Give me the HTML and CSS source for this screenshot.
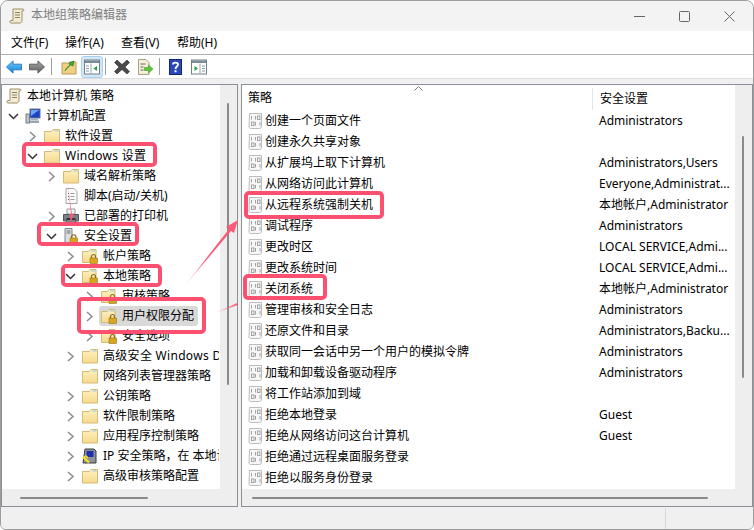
FILE: index.html
```html
<!DOCTYPE html>
<html lang="zh-CN">
<head>
<meta charset="utf-8">
<title>本地组策略编辑器</title>
<link rel="stylesheet" href="styles.css">
</head>
<body>
<svg class="defs" aria-hidden="true">
  <defs>
    <linearGradient id="fy" x1="0" y1="0" x2="0" y2="1"><stop offset="0" stop-color="#fdf1c2"/><stop offset="1" stop-color="#f6d98c"/></linearGradient>
    <linearGradient id="blue" x1="0" y1="0" x2="0" y2="1"><stop offset="0" stop-color="#6fd0fb"/><stop offset="1" stop-color="#0f7fd6"/></linearGradient>
    <linearGradient id="grey" x1="0" y1="0" x2="0" y2="1"><stop offset="0" stop-color="#a8a8a8"/><stop offset="1" stop-color="#5f5f5f"/></linearGradient>
    <linearGradient id="fadeA" gradientUnits="userSpaceOnUse" x1="183" y1="288" x2="238" y2="220"><stop offset="0" stop-color="#fb5a78" stop-opacity="0"/><stop offset=".45" stop-color="#fb5a78"/></linearGradient>
    <linearGradient id="fadeB" gradientUnits="userSpaceOnUse" x1="215" y1="313" x2="238" y2="304"><stop offset="0" stop-color="#fb5a78" stop-opacity=".1"/><stop offset="1" stop-color="#fb5a78"/></linearGradient>
    <linearGradient id="fadeC" gradientUnits="userSpaceOnUse" x1="66" y1="172" x2="71" y2="222"><stop offset="0" stop-color="#fb5a78" stop-opacity=".15"/><stop offset="1" stop-color="#fb5a78"/></linearGradient>
    <symbol id="chev-r" viewBox="0 0 11 11"><path d="M3 1l5 4.500-5 4.500" fill="none" stroke="#8c8c8c" stroke-width="1.500"/></symbol>
    <symbol id="chev-d" viewBox="0 0 11 11"><path d="M1 3l4.500 4.500L10 3" fill="none" stroke="#333" stroke-width="1.500"/></symbol>
    <symbol id="folder" viewBox="0 0 16 16"><path d="M.5 3.500V15H15.500V1.500H9L7.500 3.500Z" fill="url(#fy)" stroke="#d3ba78"/><path d="M10.500 2.500h4v1h-4z" fill="#8ccbe8"/></symbol>
    <symbol id="lockf" viewBox="0 0 16 16"><path d="M.5 3.500V14.500H14V1.500H8L6.500 3.500Z" fill="url(#fy)" stroke="#d3ba78"/><path d="M9 2.500h4v1H9z" fill="#8ccbe8"/><path d="M9.500 10V8.500a2 2 0 0 1 4 0V10" fill="none" stroke="#8a6d1c" stroke-width="1.200"/><rect x="8" y="10" width="7.500" height="5.500" fill="#d9a520" stroke="#98761a" stroke-width=".6"/></symbol>
    <symbol id="scroll" viewBox="0 0 16 16"><path d="M4 1h10c1 0 1 2 0 2h-1v9c0 2-1 3-2 3H2c-1.500 0-1.500-2.500 0-2.500h2Z" fill="#f4ecd0" stroke="#9c8e6c"/><path d="M6 4.500h5M6 7h5M6 9.500h5" stroke="#8c8468"/></symbol>
    <symbol id="pc" viewBox="0 0 16 16"><rect x="5" y="1" width="10" height="9" fill="#1b43c9" stroke="#6a7588"/><path d="M6 2l8 0-8 6z" fill="#6fa6ee"/><path d="M7 10h6v2H5z" fill="#a8b0bc"/><rect x="1" y="6" width="3.500" height="9" fill="#c1c7cf" stroke="#59616c" stroke-width=".8"/><path d="M5 12.500h9V15H5z" fill="#9aa3ae"/></symbol>
    <symbol id="script" viewBox="0 0 16 16"><path d="M3 .5H11L14 3.500V15.500H3Z" fill="#fbfbfb" stroke="#a4a4a4"/><path d="M5 5h1v1H5zM5 8h1v1H5zM5 11h1v1H5z" fill="#666"/><path d="M7.500 5.500h4M7.500 8.500h4M7.500 11.500h4" stroke="#9a9a9a"/></symbol>
    <symbol id="printer" viewBox="0 0 16 16"><path d="M4 1h8v5H4z" fill="#f4f4f4" stroke="#9a9a9a"/><path d="M.5 6.500h15V13H.5z" fill="#7a7f85" stroke="#4e5257"/><path d="M3.500 10h9v5h-9z" fill="#2e3135"/><path d="M4 13h8" stroke="#d8d8d8"/></symbol>
    <symbol id="server" viewBox="0 0 16 16"><path d="M2 .5h7v15H2z" fill="#dcdfe2" stroke="#7f858c"/><path d="M3.500 3h4M3.500 5h4" stroke="#6a6f75"/><path d="M8.500 10.500V9a2.200 2.200 0 0 1 4.500 0v1.500" fill="none" stroke="#8a6d1c" stroke-width="1.200"/><rect x="7" y="10" width="7.500" height="5.500" fill="#d9a520" stroke="#98761a" stroke-width=".6"/></symbol>
    <symbol id="ip" viewBox="0 0 16 16"><path d="M3 1h9l2 2v12H1z" fill="#8e949a" stroke="#3a3d41"/><path d="M4.500 3h7v6h-7z" fill="#1c2fb5"/><path d="M1 9l6 5.500" stroke="#f6e32e" stroke-width="2.200"/><path d="M1 10l3-2 2 2" fill="none" stroke="#f6e32e" stroke-width="1.500"/></symbol>
    <symbol id="policy" viewBox="0 0 15 16"><path d="M1.500.5H13.500V13c0 1.500-1 2.500-2 2.500H2.500C1.500 15.500 1 14.500 1 14Z" fill="#f7f7f7" stroke="#bcbcbc"/><g fill="none" stroke="#a2a2a2"><path d="M3.500 3v3.500M12 9v3.500M7.500 3v3.500M7.500 9v3.500"/><rect x="9.500" y="3" width="2.500" height="3.500"/><rect x="3.500" y="9" width="2.500" height="3.500"/></g></symbol>
    <symbol id="t-back" viewBox="0 0 17 14"><path d="M.5 7L7.500.5V4H16.500V10H7.500V13.500Z" fill="url(#blue)" stroke="#2b79bb"/></symbol>
    <symbol id="t-fwd" viewBox="0 0 17 14"><path d="M16.500 7L9.500.5V4H.5V10H9.500V13.500Z" fill="url(#grey)" stroke="#5a5a5a"/></symbol>
    <symbol id="t-up" viewBox="0 0 16 16"><path d="M1 4V15H15V3H9L7.500 4Z" fill="#f1cf83" stroke="#b99a56"/><path d="M4 12C5 9 7 7.500 9 6.500L8 4l5-2-1 5-2-1" fill="#45a83c" stroke="#2c7d2a" stroke-width=".8"/></symbol>
    <symbol id="t-tree" viewBox="0 0 16 15"><rect x=".5" y=".5" width="15" height="14" fill="#fff" stroke="#6f7f88"/><path d="M1 1h14v2.500H1z" fill="#7c8c96"/><path d="M7 4v10" stroke="#98a4ab"/><path d="M2 6h3v1H2zM2 8.500h3v1H2zM2 11h3v1H2z" fill="#8a979e"/><path d="M13 6.500v5L9.500 9z" fill="#22a43c"/></symbol>
    <symbol id="t-x" viewBox="0 0 16 16"><path d="M3 1l5 4.500L13 1l2.500 2.500L11 8l4.500 4.500L13 15l-5-4.500L3 15 .5 12.500 5 8 .5 3.500Z" fill="#4a4a4a" stroke="#2e2e2e" stroke-width=".6"/></symbol>
    <symbol id="t-export" viewBox="0 0 16 16"><path d="M1.500.5H9L12 3.500V15.500H1.500Z" fill="#f5efd8" stroke="#a8a08a"/><path d="M3.500 5h5M3.500 8h3M3.500 11h3" stroke="#666"/><path d="M7.500 8.500h4V6L16 10l-4.500 4v-2.500h-4z" fill="#5fc43c" stroke="#3a9a2a" stroke-width=".6"/></symbol>
    <symbol id="t-help" viewBox="0 0 13 16"><rect x=".5" y=".5" width="12" height="15" fill="#2a47b8" stroke="#16246e"/><path d="M4 5.500C4 3 9 3 9 5.500 9 7.500 6.500 7.500 6.500 10" fill="none" stroke="#fff" stroke-width="1.800"/><rect x="5.500" y="11.200" width="2" height="2" fill="#fff"/></symbol>
    <symbol id="t-view" viewBox="0 0 16 15"><rect x=".5" y=".5" width="15" height="14" fill="#fff" stroke="#6f7f88"/><path d="M1 1h14v2.500H1z" fill="#7c8c96"/><path d="M9 4v10" stroke="#98a4ab"/><path d="M11 6h3v1h-3zM11 8.500h3v1h-3zM11 11h3v1h-3z" fill="#8a979e"/><path d="M3.500 6.500v5L7 9z" fill="#22a43c"/></symbol>
  </defs>
</svg>

<div class="window">
  <header class="titlebar">
    <svg class="title-icon"><use href="#scroll"/></svg>
    <span class="title-text">本地组策略编辑器</span>
    <div class="controls">
      <svg class="ctl" viewBox="0 0 11 11"><path d="M0 5.500h11" stroke="#666" fill="none"/></svg>
      <svg class="ctl" viewBox="0 0 11 11"><rect x=".5" y=".5" width="10" height="10" rx="1" stroke="#666" fill="none"/></svg>
      <svg class="ctl" viewBox="0 0 11 11"><path d="M.5.500l10 10M10.500.500l-10 10" stroke="#666" fill="none"/></svg>
    </div>
  </header>

  <nav class="menubar">
    <span class="menu-item">文件(F)</span>
    <span class="menu-item">操作(A)</span>
    <span class="menu-item">查看(V)</span>
    <span class="menu-item">帮助(H)</span>
  </nav>

  <div class="toolbar">
    <svg class="tb tb-back"><use href="#t-back"/></svg>
    <svg class="tb tb-fwd"><use href="#t-fwd"/></svg>
    <span class="tb-sep"></span>
    <svg class="tb tb-up"><use href="#t-up"/></svg>
    <span class="tb-active"><svg class="tb"><use href="#t-tree"/></svg></span>
    <span class="tb-sep tb-sep2"></span>
    <svg class="tb tb-x"><use href="#t-x"/></svg>
    <svg class="tb tb-export"><use href="#t-export"/></svg>
    <span class="tb-sep tb-sep3"></span>
    <svg class="tb tb-help"><use href="#t-help"/></svg>
    <svg class="tb tb-view"><use href="#t-view"/></svg>
  </div>
  <div class="strip"></div>

  <main class="panes">
    <section class="pane pane-left">
      <div class="tree">
        <div class="row l0"><span class="chev"></span><svg class="ico"><use href="#scroll"/></svg><span class="label">本地计算机 策略</span></div>
        <div class="row l1"><svg class="chev"><use href="#chev-d"/></svg><svg class="ico"><use href="#pc"/></svg><span class="label">计算机配置</span></div>
        <div class="row l2"><svg class="chev"><use href="#chev-r"/></svg><svg class="ico"><use href="#folder"/></svg><span class="label">软件设置</span></div>
        <div class="row l2"><svg class="chev"><use href="#chev-d"/></svg><svg class="ico"><use href="#folder"/></svg><span class="label wide">Windows 设置</span></div>
        <div class="row l3"><svg class="chev"><use href="#chev-r"/></svg><svg class="ico"><use href="#folder"/></svg><span class="label">域名解析策略</span></div>
        <div class="row l3"><span class="chev"></span><svg class="ico"><use href="#script"/></svg><span class="label">脚本(启动/关机)</span></div>
        <div class="row l3"><svg class="chev"><use href="#chev-r"/></svg><svg class="ico"><use href="#printer"/></svg><span class="label">已部署的打印机</span></div>
        <div class="row l3"><svg class="chev"><use href="#chev-d"/></svg><svg class="ico"><use href="#server"/></svg><span class="label">安全设置</span></div>
        <div class="row l4"><svg class="chev"><use href="#chev-r"/></svg><svg class="ico"><use href="#lockf"/></svg><span class="label">帐户策略</span></div>
        <div class="row l4"><svg class="chev"><use href="#chev-d"/></svg><svg class="ico"><use href="#lockf"/></svg><span class="label">本地策略</span></div>
        <div class="row l5"><svg class="chev"><use href="#chev-r"/></svg><svg class="ico"><use href="#lockf"/></svg><span class="label">审核策略</span></div>
        <div class="row l5 selected"><svg class="chev"><use href="#chev-r"/></svg><span class="sel-box"><svg class="ico"><use href="#lockf"/></svg><span class="label">用户权限分配</span></span></div>
        <div class="row l5"><svg class="chev"><use href="#chev-r"/></svg><svg class="ico"><use href="#lockf"/></svg><span class="label">安全选项</span></div>
        <div class="row l4"><svg class="chev"><use href="#chev-r"/></svg><svg class="ico"><use href="#folder"/></svg><span class="label wide">高级安全 Windows Defender 防火墙</span></div>
        <div class="row l4"><span class="chev"></span><svg class="ico"><use href="#folder"/></svg><span class="label">网络列表管理器策略</span></div>
        <div class="row l4"><svg class="chev"><use href="#chev-r"/></svg><svg class="ico"><use href="#folder"/></svg><span class="label">公钥策略</span></div>
        <div class="row l4"><svg class="chev"><use href="#chev-r"/></svg><svg class="ico"><use href="#folder"/></svg><span class="label">软件限制策略</span></div>
        <div class="row l4"><svg class="chev"><use href="#chev-r"/></svg><svg class="ico"><use href="#folder"/></svg><span class="label">应用程序控制策略</span></div>
        <div class="row l4"><svg class="chev"><use href="#chev-r"/></svg><svg class="ico"><use href="#ip"/></svg><span class="label">IP 安全策略，在 本地计算机</span></div>
        <div class="row l4"><svg class="chev"><use href="#chev-r"/></svg><svg class="ico"><use href="#folder"/></svg><span class="label">高级审核策略配置</span></div>
      </div>
      <div class="vtrack vtrack-left"><span class="vthumb vthumb-left"></span></div>
      <div class="htrack htrack-left"><span class="hthumb hthumb-left"></span></div>
      <div class="corner"></div>
    </section>

    <section class="pane pane-right">
      <div class="list">
        <div class="list-head">
          <span class="head-name">策略</span>
          <svg class="sort" viewBox="0 0 9 5"><path d="M.5 4.500l4-4 4 4" fill="none" stroke="#777"/></svg>
          <span class="head-val">安全设置</span>
        </div>
        <div class="item"><svg class="pol"><use href="#policy"/></svg><span class="name">创建一个页面文件</span><span class="val">Administrators</span></div>
        <div class="item"><svg class="pol"><use href="#policy"/></svg><span class="name">创建永久共享对象</span><span class="val"></span></div>
        <div class="item"><svg class="pol"><use href="#policy"/></svg><span class="name">从扩展坞上取下计算机</span><span class="val">Administrators,Users</span></div>
        <div class="item"><svg class="pol"><use href="#policy"/></svg><span class="name">从网络访问此计算机</span><span class="val">Everyone,Administrat...</span></div>
        <div class="item"><svg class="pol"><use href="#policy"/></svg><span class="name">从远程系统强制关机</span><span class="val">本地帐户,Administrator</span></div>
        <div class="item"><svg class="pol"><use href="#policy"/></svg><span class="name">调试程序</span><span class="val">Administrators</span></div>
        <div class="item"><svg class="pol"><use href="#policy"/></svg><span class="name">更改时区</span><span class="val">LOCAL SERVICE,Admi...</span></div>
        <div class="item"><svg class="pol"><use href="#policy"/></svg><span class="name">更改系统时间</span><span class="val">LOCAL SERVICE,Admi...</span></div>
        <div class="item"><svg class="pol"><use href="#policy"/></svg><span class="name">关闭系统</span><span class="val">本地帐户,Administrator</span></div>
        <div class="item"><svg class="pol"><use href="#policy"/></svg><span class="name">管理审核和安全日志</span><span class="val">Administrators</span></div>
        <div class="item"><svg class="pol"><use href="#policy"/></svg><span class="name">还原文件和目录</span><span class="val">Administrators,Backu...</span></div>
        <div class="item"><svg class="pol"><use href="#policy"/></svg><span class="name">获取同一会话中另一个用户的模拟令牌</span><span class="val">Administrators</span></div>
        <div class="item"><svg class="pol"><use href="#policy"/></svg><span class="name">加载和卸载设备驱动程序</span><span class="val">Administrators</span></div>
        <div class="item"><svg class="pol"><use href="#policy"/></svg><span class="name">将工作站添加到域</span><span class="val"></span></div>
        <div class="item"><svg class="pol"><use href="#policy"/></svg><span class="name">拒绝本地登录</span><span class="val">Guest</span></div>
        <div class="item"><svg class="pol"><use href="#policy"/></svg><span class="name">拒绝从网络访问这台计算机</span><span class="val">Guest</span></div>
        <div class="item"><svg class="pol"><use href="#policy"/></svg><span class="name">拒绝通过远程桌面服务登录</span><span class="val"></span></div>
        <div class="item"><svg class="pol"><use href="#policy"/></svg><span class="name">拒绝以服务身份登录</span><span class="val"></span></div>
      </div>
      <div class="vtrack vtrack-right"><span class="vthumb vthumb-right"></span></div>
      <div class="htrack htrack-right"><span class="hthumb hthumb-right"></span></div>
      <div class="corner"></div>
    </section>
  </main>

  <footer class="statusbar"><span class="status-cell"></span></footer>

  <svg class="annotations" viewBox="0 0 754 530" aria-hidden="true">
    <g class="ann-box">
      <rect x="24" y="144" width="131" height="21" rx="3"/>
      <rect x="39" y="224" width="98" height="20" rx="3"/>
      <rect x="63" y="266" width="97" height="19" rx="3"/>
      <rect x="79" y="299" width="125" height="33" rx="3"/>
      <rect x="246" y="193" width="136" height="24" rx="3"/>
      <rect x="245" y="276" width="80" height="22" rx="3"/>
    </g>
    <polygon points="183,288 229,229 226,227 238,220 234,233 231,231" fill="url(#fadeA)"/>
    <polygon points="215,313 237,303 238,305" fill="url(#fadeB)"/>
    <polygon points="66,172 71,214 69,214 71,222 74,214 72,214" fill="url(#fadeC)"/>
  </svg>
</div>
</body>
</html>
```
FILE: styles.css
```css
* { box-sizing: border-box; }
html, body { margin: 0; padding: 0; background: #fff; }
body {
  width: 754px;
  height: 530px;
  overflow: hidden;
  font: 12px/16px "Noto Sans", "Noto Sans CJK SC", sans-serif;
  color: #000;
}
.defs { position: absolute; width: 0; height: 0; }

.window {
  position: relative;
  width: 754px;
  height: 530px;
  display: flex;
  flex-direction: column;
  background: #f0f0f0;
  border: 1px solid #9c9c9c;
  border-radius: 8px 8px 6px 6px;
  overflow: hidden;
}

.titlebar {
  height: 30px;
  flex: none;
  display: flex;
  align-items: center;
  padding-left: 8px;
  background: #f3f3f3;
}
.title-icon { width: 16px; height: 16px; }
.title-text { margin-left: 6px; padding-bottom: 2px; color: #808080; }
.controls { margin-left: auto; display: flex; align-items: center; gap: 34px; padding-right: 18px; }
.ctl { width: 11px; height: 11px; }

.menubar {
  height: 24px;
  flex: none;
  display: flex;
  align-items: center;
  padding-left: 10px;
  padding-top: 1px;
  background: #fff;
  border-bottom: 1px solid #b0b0b0;
}
.menu-item { width: 56px; }
.menu-item:first-child { width: 54px; }

.toolbar {
  height: 23px;
  flex: none;
  display: flex;
  align-items: center;
  padding-left: 5px;
  background: #fff;
}
.tb { width: 16px; height: 16px; flex: none; }
.tb-fwd { margin-left: 7px; }
.tb-sep { width: 1px; height: 17px; background: #a0a0a0; margin-left: 6px; flex: none; }
.tb-up { margin-left: 9px; }
.tb-active {
  width: 22px;
  height: 22px;
  margin-left: 4px;
  display: flex;
  align-items: center;
  justify-content: center;
  background: #d5e8f8;
  border: 1px solid #a6d1f3;
  border-radius: 3px;
}
.tb-sep2 { margin-left: 2px; }
.tb-x { margin-left: 8px; }
.tb-export { margin-left: 7px; }
.tb-sep3 { margin-left: 6px; }
.tb-help { width: 13px; margin-left: 9px; }
.tb-view { margin-left: 9px; }

.strip { height: 6px; flex: none; background: #f0f0f0; border-top: 1px solid #dedede; }

.panes {
  height: 423px;
  flex: none;
  display: flex;
  gap: 3px;
}
.pane {
  display: grid;
  grid-template-columns: 1fr 17px;
  grid-template-rows: 1fr 17px;
  background: #fff;
  border: 1px solid #8a9098;
  overflow: hidden;
}
.pane-left { width: 237px; flex: none; }
.pane-right { width: 512px; flex: none; }

.tree { overflow: hidden; min-width: 0; padding-top: 1px; margin-right: 1px; }
.row {
  height: 20px;
  display: flex;
  align-items: center;
  white-space: nowrap;
}
.l0 { padding-left: 4px; }
.l1 { padding-left: 6px; }
.l2 { padding-left: 25px; }
.l3 { padding-left: 44px; }
.l4 { padding-left: 63px; }
.l5 { padding-left: 82px; }
.chev { width: 11px; height: 11px; flex: none; margin-right: 6px; }
.l0 .chev { display: none; }
.ico { width: 16px; height: 16px; flex: none; }
.label { margin-left: 5px; }
.wide { letter-spacing: .3px; }
.sel-box {
  display: flex;
  align-items: center;
  height: 20px;
  padding-left: 2px;
  padding-right: 4px;
  margin-left: -2px;
  background: #d9d9d9;
  border-radius: 3px;
}

.vtrack { background: #eeeeee; padding-left: 7px; }
.vthumb { display: block; width: 2px; background: #8a8a8a; border-radius: 1px; }
.vtrack-left { padding-top: 18px; }
.vthumb-left { height: 282px; }
.vtrack-right { padding-top: 51px; }
.vthumb-right { height: 242px; }
.htrack { background: #eeeeee; padding-top: 8px; }
.hthumb { display: block; height: 2px; background: #8a8a8a; border-radius: 1px; }
.hthumb-left { width: 128px; margin-left: 18px; }
.hthumb-right { width: 456px; margin-left: 10px; }
.corner { background: #eeeeee; }

.list { overflow: hidden; min-width: 0; }
.list-head {
  position: relative;
  height: 25px;
  display: flex;
  align-items: center;
  padding-left: 6px;
}
.head-name { width: 344px; }
.head-val { padding-left: 7px; height: 22px; line-height: 22px; border-left: 1px solid #e4e4e4; margin-top: 2px; }
.sort { position: absolute; left: 172px; top: 1px; width: 9px; height: 5px; }
.item {
  height: 21px;
  display: flex;
  align-items: center;
  padding-left: 6px;
  white-space: nowrap;
}
.pol { width: 15px; height: 16px; flex: none; }
.name { width: 334px; flex: none; margin-left: 2px; }
.val { flex: none; }

.statusbar {
  flex: 1;
  display: flex;
  justify-content: flex-end;
  background: #f0f0f0;
  padding-top: 1px;
}
.status-cell { width: 88px; border-left: 1px solid #d8d8d8; }

.annotations { position: absolute; left: -1px; top: -1px; width: 754px; height: 530px; pointer-events: none; }
.ann-box rect { fill: none; stroke: #fb5070; stroke-width: 4; }
```
